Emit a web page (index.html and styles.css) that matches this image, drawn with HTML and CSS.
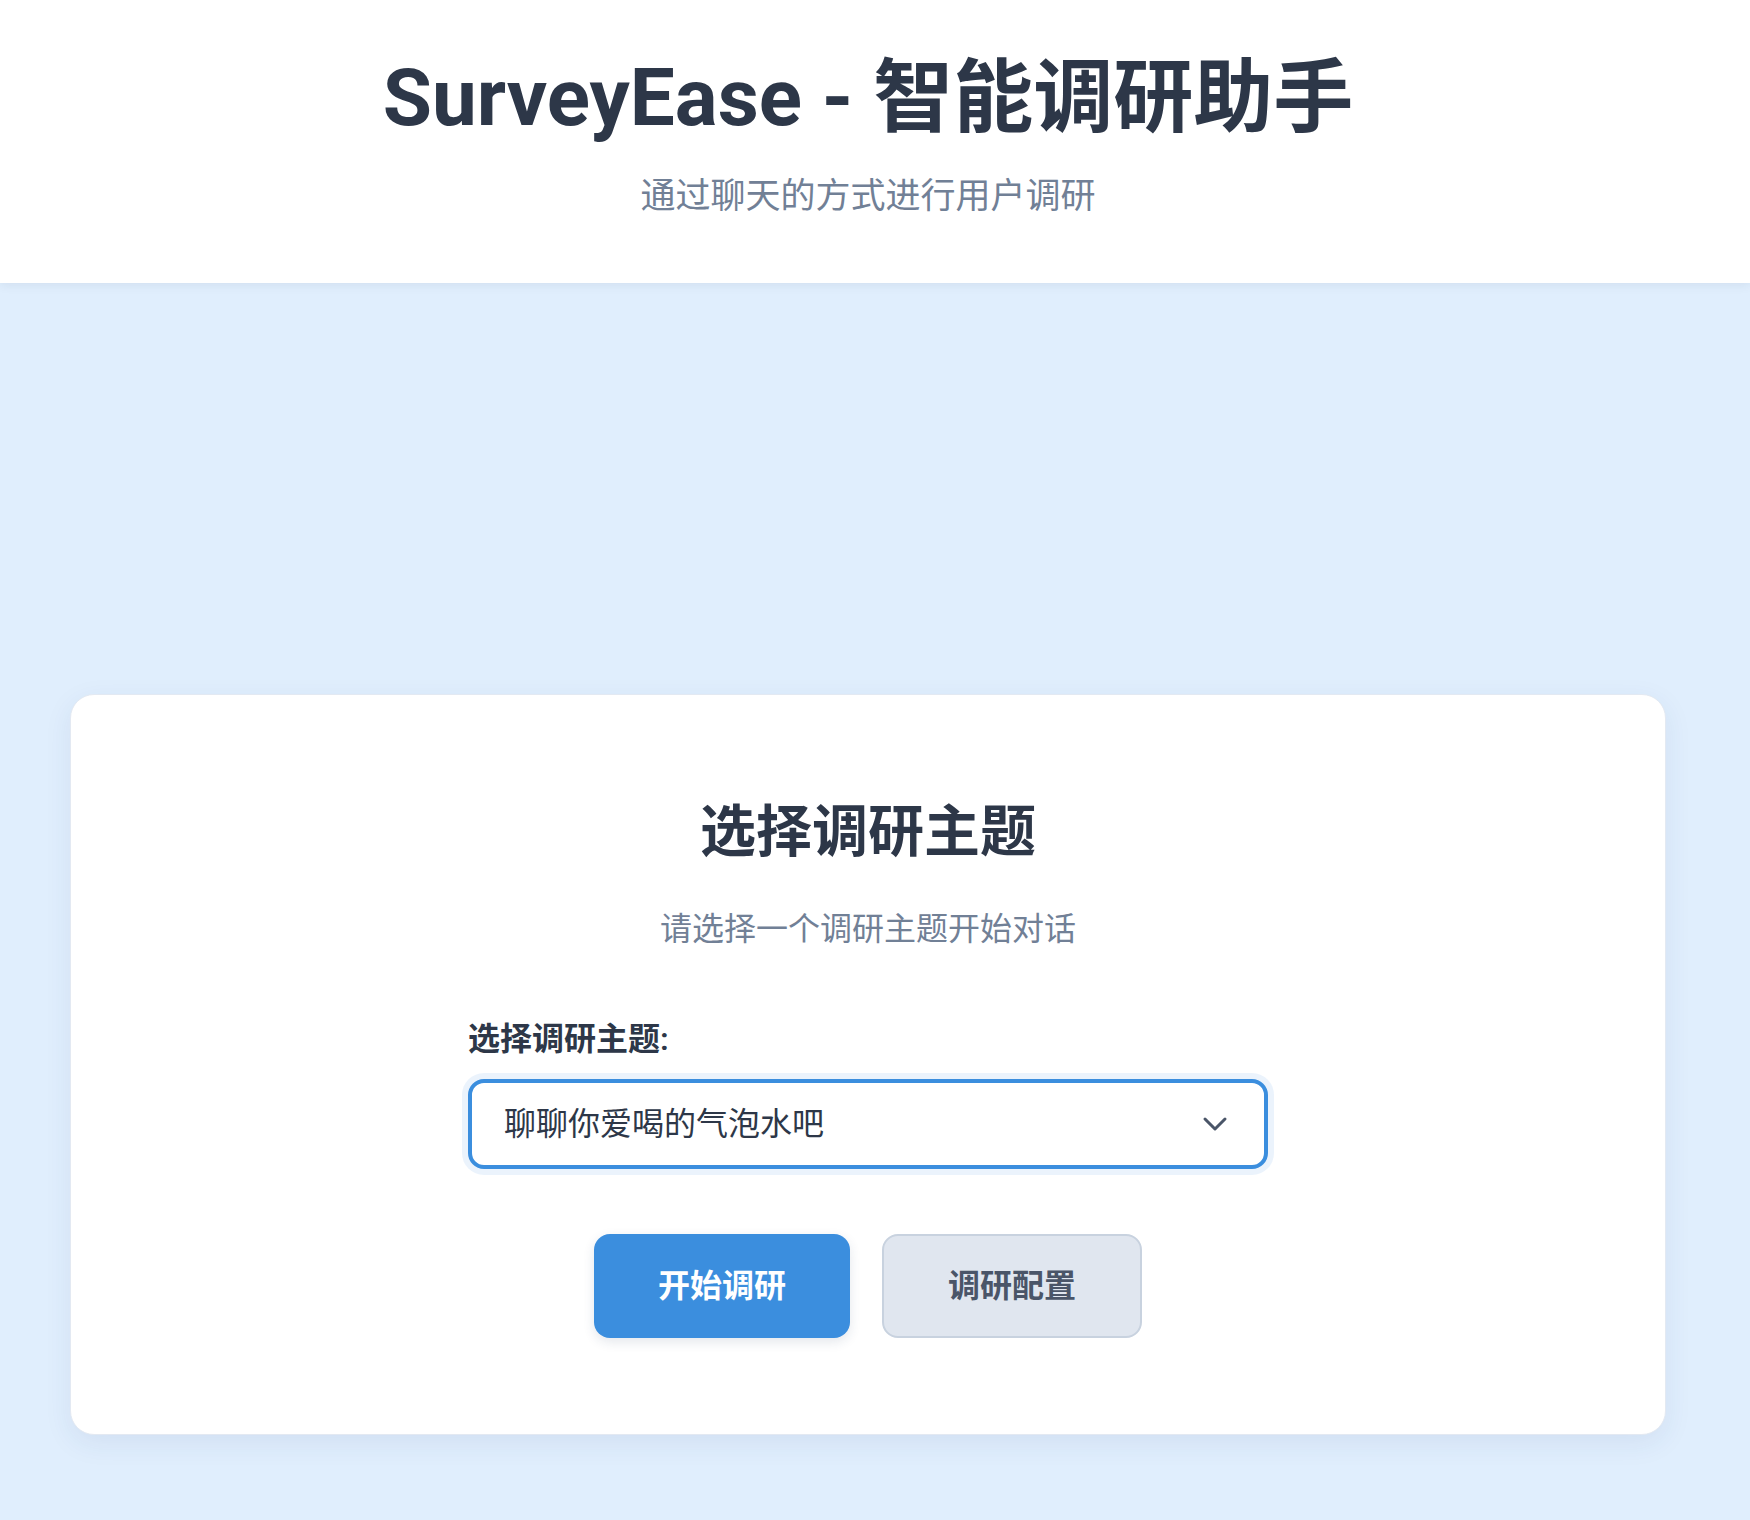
FILE: index.html
```html
<!DOCTYPE html>
<html lang="zh-CN">
<head>
<meta charset="utf-8">
<title>SurveyEase - 智能调研助手</title>
<link rel="stylesheet" href="styles.css">
</head>
<body>
<header class="site-header">
  <div class="header-inner">
    <h1 class="site-title">SurveyEase - 智能调研助手</h1>
    <p class="site-subtitle">通过聊天的方式进行用户调研</p>
  </div>
</header>
<main class="main">
  <section class="card">
    <h2 class="card-title">选择调研主题</h2>
    <p class="card-subtitle">请选择一个调研主题开始对话</p>
    <div class="field">
      <label class="field-label" for="topic">选择调研主题:</label>
      <div class="select-wrap">
        <select id="topic" class="select">
          <option>聊聊你爱喝的气泡水吧</option>
        </select>
        <svg class="chevron" width="26" height="16" viewBox="0 0 26 16" aria-hidden="true">
          <path d="M3 3 L13 13 L23 3" fill="none" stroke="#4a5568" stroke-width="3" stroke-linecap="round" stroke-linejoin="round"/>
        </svg>
      </div>
    </div>
    <div class="actions">
      <button class="btn btn-primary" type="button">开始调研</button>
      <button class="btn btn-secondary" type="button">调研配置</button>
    </div>
  </section>
</main>
</body>
</html>
```
FILE: styles.css
```css
* { box-sizing: border-box; }

html, body {
  margin: 0;
  padding: 0;
}

body {
  background: #e0eefd;
  font-family: Roboto, "Noto Sans CJK SC", sans-serif;
  color: #2d3748;
  min-height: 1520px;
}

.site-header {
  background: #ffffff;
  box-shadow: 0 2px 10px rgba(30, 50, 80, 0.08);
  position: relative;
  z-index: 1;
}

.header-inner {
  margin-right: 14px;
  padding: 50px 0 60px;
  text-align: center;
}

.site-title {
  margin: 0;
  font-size: 80px;
  line-height: 96px;
  font-weight: 700;
  color: #2d3748;
}

.site-subtitle {
  margin: 24px 0 0;
  font-size: 35px;
  line-height: 53px;
  color: #718096;
}

.main {
  margin-right: 14px;
  padding: 411px 70px 86px;
}

.card {
  background: #ffffff;
  border: 1px solid #e3e9f2;
  border-radius: 24px;
  box-shadow: 0 8px 28px rgba(40, 70, 110, 0.08);
  padding: 98px 40px 96px;
  display: flex;
  flex-direction: column;
  align-items: center;
}

.card-title {
  margin: 0;
  font-size: 56px;
  line-height: 78px;
  font-weight: 700;
  color: #2d3748;
}

.card-subtitle {
  margin: 34px 0 0;
  font-size: 32px;
  line-height: 48px;
  color: #718096;
}

.field {
  margin-top: 62px;
  width: 800px;
  display: flex;
  flex-direction: column;
  gap: 16px;
}

.field-label {
  font-size: 32px;
  line-height: 48px;
  font-weight: 600;
  color: #2d3748;
}

.select-wrap {
  position: relative;
}

.select {
  -webkit-appearance: none;
  appearance: none;
  width: 100%;
  height: 90px;
  border: 4px solid #3b8ede;
  border-radius: 16px;
  box-shadow: 0 0 0 6px rgba(59, 142, 222, 0.1);
  background: #ffffff;
  padding: 0 80px 0 32px;
  font-family: Roboto, "Noto Sans CJK SC", sans-serif;
  font-size: 32px;
  color: #2d3748;
  outline: none;
}

.chevron {
  position: absolute;
  right: 40px;
  top: 37px;
  pointer-events: none;
}

.actions {
  margin-top: 65px;
  display: flex;
  gap: 32px;
}

.btn {
  font-family: Roboto, "Noto Sans CJK SC", sans-serif;
  font-size: 32px;
  line-height: 48px;
  font-weight: 600;
  padding: 28px 64px;
  border-radius: 16px;
  cursor: pointer;
}

.btn-primary {
  background: #3b8ede;
  color: #ffffff;
  border: none;
  box-shadow: 0 4px 12px rgba(30, 60, 100, 0.12);
}

.btn-secondary {
  background: #e0e6ef;
  color: #4a5568;
  border: 2px solid #c8d2df;
  padding: 26px 64px;
}
```
